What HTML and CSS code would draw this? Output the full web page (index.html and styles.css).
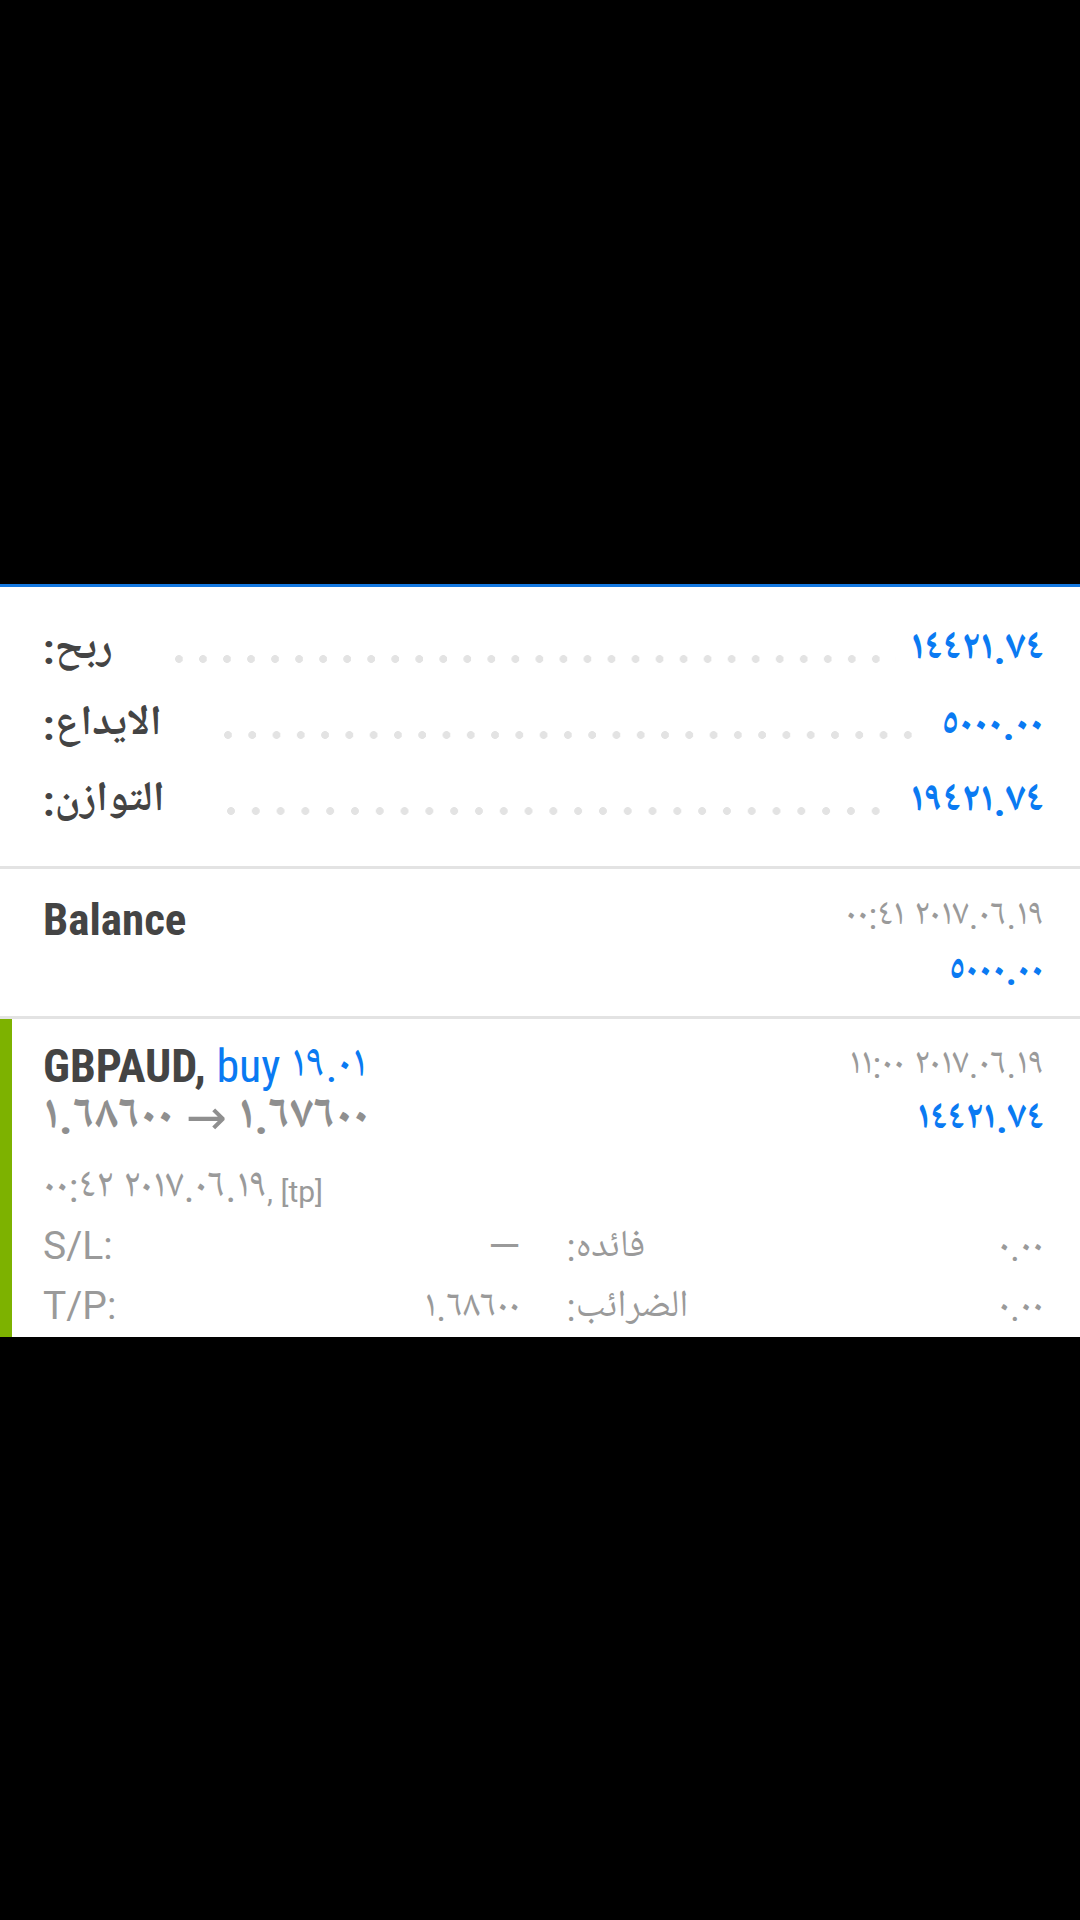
FILE: index.html
```html
<!DOCTYPE html>
<html lang="ar">
<head>
<meta charset="utf-8">
<title>History</title>
<link rel="stylesheet" href="styles.css">
</head>
<body>
<div class="backdrop-top"></div>
<div class="panel">
  <section class="summary">
    <div class="sum-row">
      <span class="sum-label" dir="rtl">ربح:</span>
      <span class="leader"></span>
      <bdo dir="ltr" class="sum-value">١٤٤٢١.٧٤</bdo>
    </div>
    <div class="sum-row">
      <span class="sum-label" dir="rtl">الايداع:</span>
      <span class="leader"></span>
      <bdo dir="ltr" class="sum-value">٥٠٠٠.٠٠</bdo>
    </div>
    <div class="sum-row">
      <span class="sum-label" dir="rtl">التوازن:</span>
      <span class="leader"></span>
      <bdo dir="ltr" class="sum-value">١٩٤٢١.٧٤</bdo>
    </div>
  </section>

  <section class="deal">
    <div class="deal-left">
      <div class="title title-balance">Balance</div>
    </div>
    <div class="deal-right">
      <div class="deal-time"><bdo dir="ltr">٠٠:٤١ ٢٠١٧.٠٦.١٩</bdo></div>
      <div class="deal-amount deal-amount-balance"><bdo dir="ltr">٥٠٠٠.٠٠</bdo></div>
    </div>
  </section>

  <section class="order">
    <div class="order-head">
      <div class="order-left">
        <div class="title title-order"><span class="sym">GBPAUD,</span> <span class="side">buy <bdo dir="ltr" class="vol">١٩.٠١</bdo></span></div>
        <div class="order-prices"><bdo dir="ltr">١.٦٨٦٠٠ <span class="arrow">→</span> ١.٦٧٦٠٠</bdo></div>
      </div>
      <div class="deal-right">
        <div class="deal-time"><bdo dir="ltr">١١:٠٠ ٢٠١٧.٠٦.١٩</bdo></div>
        <div class="deal-amount deal-amount-order"><bdo dir="ltr">١٤٤٢١.٧٤</bdo></div>
      </div>
    </div>
    <div class="order-comment"><bdo dir="ltr" class="comment-time">٠٠:٤٢ ٢٠١٧.٠٦.١٩</bdo>, [tp]</div>
    <div class="order-grid">
      <div class="cell"><span class="k">S/L:</span><span class="v dash">—</span></div>
      <div class="cell"><span class="k k-ar" dir="rtl">فائده:</span><bdo dir="ltr" class="v">٠.٠٠</bdo></div>
      <div class="cell"><span class="k">T/P:</span><bdo dir="ltr" class="v">١.٦٨٦٠٠</bdo></div>
      <div class="cell"><span class="k k-ar" dir="rtl">الضرائب:</span><bdo dir="ltr" class="v">٠.٠٠</bdo></div>
    </div>
  </section>
</div>
</body>
</html>
```

FILE: styles.css
```css
* {
  box-sizing: border-box;
  margin: 0;
  padding: 0;
}

html,
body {
  background: #000;
}

body {
  width: 1080px;
  height: 1920px;
  overflow: hidden;
  font-family: Roboto, "Noto Naskh Arabic UI", "Noto Naskh Arabic", "Noto Sans Arabic UI", "Noto Sans Arabic", "DejaVu Sans", sans-serif;
  color: #444;
}

.backdrop-top {
  height: 584px;
}

.panel {
  background: #fff;
  border-top: 3px solid #1478e0;
  height: 753px;
  overflow: hidden;
}

/* ---------- summary ---------- */
.summary {
  padding: 25px 36px 26px 43px;
  border-bottom: 3px solid #e3e3e3;
}

.sum-row {
  height: 76px;
  display: flex;
  align-items: center;
}

.sum-label {
  font-size: 42px;
  font-weight: 700;
  color: #444;
  line-height: 76px;
}

.leader {
  flex: 1;
  height: 8px;
  margin: 18px 14px 0 62px;
  background-image: radial-gradient(circle at 4px 4px, #e3e3e3 3.6px, rgba(227, 227, 227, 0) 4.2px);
  background-size: 24px 8px;
  background-repeat: space no-repeat;
}

.sum-value {
  font-size: 41px;
  font-weight: 700;
  color: #0a7af2;
  line-height: 76px;
}

/* ---------- deal rows ---------- */
.deal {
  display: flex;
  justify-content: space-between;
  padding: 22px 36px 21px 43px;
  border-bottom: 3px solid #e3e3e3;
  height: 150px;
}

.title {
  font-family: "Roboto Condensed", Roboto, "Noto Naskh Arabic UI", "DejaVu Sans", sans-serif;
  font-stretch: condensed;
  font-weight: 700;
  color: #444;
  line-height: 52px;
  white-space: nowrap;
}

.title-balance {
  font-size: 45px;
  margin-top: 3px;
}

.title-order {
  font-size: 46px;
}

.side {
  color: #0a7af2;
  font-weight: 400;
}

.deal-right {
  text-align: right;
}

.deal-time {
  font-size: 37px;
  color: #9a9a9a;
  line-height: 52px;
}

.deal-amount {
  font-size: 38px;
  font-weight: 700;
  color: #0a7af2;
  line-height: 52px;
}

.deal-amount-balance {
  margin-top: 3px;
}

.deal-amount-order {
  font-size: 39px;
  margin-top: 2px;
}

/* ---------- order ---------- */
.order {
  border-left: 12px solid #7db200;
  padding: 21px 36px 0 31px;
  height: 318px;
}

.order-head {
  display: flex;
  justify-content: space-between;
}

.order-prices {
  font-size: 47px;
  font-weight: 700;
  color: #8f8f8f;
  line-height: 52px;
  white-space: nowrap;
}

.arrow {
  font-family: "DejaVu Sans", sans-serif;
  font-weight: 400;
  font-size: 49px;
}

.order-comment {
  margin-top: 14px;
  font-size: 30px;
  color: #9a9a9a;
  line-height: 56px;
}

.comment-time {
  font-size: 41px;
}

.order-grid {
  display: grid;
  grid-template-columns: 1fr 1fr;
  column-gap: 46px;
  margin-top: -4px;
}

.cell {
  height: 60px;
  display: flex;
  justify-content: space-between;
  align-items: center;
  font-size: 39px;
  color: #9a9a9a;
}

.k-ar {
  font-size: 38px;
}

.cell .v {
  font-size: 38px;
}

.cell .dash {
  display: inline-block;
  transform: scaleX(1.1);
  transform-origin: right center;
}
```
